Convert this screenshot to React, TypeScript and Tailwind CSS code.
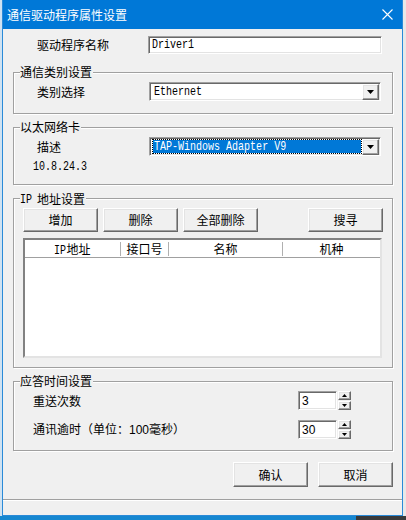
import React from "react";

const cjk = "font-['Noto_Sans_CJK_SC',sans-serif]";
const mono =
  "inline-block origin-left scale-x-[0.77] font-['Liberation_Mono',monospace] text-[13px] leading-[14px] whitespace-pre";
const raised =
  "bg-[#f0f0f0] border border-t-white border-l-white border-r-[#696969] border-b-[#696969] shadow-[inset_-1px_-1px_0_#a0a0a0,inset_1px_1px_0_#e3e3e3]";
const sunken =
  "bg-white border border-t-[#a0a0a0] border-l-[#a0a0a0] border-r-white border-b-white shadow-[inset_1px_1px_0_#696969,inset_-1px_-1px_0_#e3e3e3]";

function Btn({ children, className = "" }: { children: React.ReactNode; className?: string }) {
  return (
    <div className={`${raised} flex items-center justify-center text-[12px] text-black ${className}`}>
      {children}
    </div>
  );
}

function Group({
  label,
  className = "",
  children,
}: {
  label: React.ReactNode;
  className?: string;
  children: React.ReactNode;
}) {
  return (
    <div
      className={`relative ml-[10px] w-[380px] border border-[#a0a0a0] shadow-[1px_1px_0_#fff,inset_1px_1px_0_#fff] ${className}`}
    >
      <span className="absolute left-[6px] top-[-9px] bg-[#f0f0f0] pr-[1px] text-[12px] leading-[16px] text-black">
        {label}
      </span>
      {children}
    </div>
  );
}

function DropBtn() {
  return (
    <div className={`${raised} flex h-[16px] w-[17px] items-center justify-center`}>
      <svg width="7" height="4" viewBox="0 0 7 4">
        <path d="M0 0h7L3.5 4z" fill="#000" />
      </svg>
    </div>
  );
}

function Combo({ text, selected = false }: { text: string; selected?: boolean }) {
  return (
    <div className={`${sunken} flex h-[19px] w-[232px] items-center pl-[2px] pr-[1px]`}>
      {selected ? (
        <div className="flex h-[15px] flex-1 items-center overflow-hidden border border-white bg-[#0078d7] pl-[1px] text-white outline outline-1 -outline-offset-1 outline-dotted outline-black">
          <span className={mono}>{text}</span>
        </div>
      ) : (
        <div className="flex h-[15px] flex-1 items-center overflow-hidden pl-[2px] text-black">
          <span className={mono}>{text}</span>
        </div>
      )}
      <DropBtn />
    </div>
  );
}

function Tri({ up }: { up: boolean }) {
  return (
    <svg width="5" height="3" viewBox="0 0 5 3">
      <path d={up ? "M2.5 0L5 3H0z" : "M0 0h5L2.5 3z"} fill="#000" />
    </svg>
  );
}

function Spin({ value }: { value: string }) {
  return (
    <div className="flex h-[19px] items-stretch gap-[1px]">
      <div className={`${sunken} flex w-[39px] items-center pl-[3px] font-['Liberation_Sans',sans-serif] text-[12px] text-black`}>
        {value}
      </div>
      <div className="flex w-[13px] flex-col gap-[1px]">
        <div className={`${raised} flex flex-1 items-center justify-center`}>
          <Tri up />
        </div>
        <div className={`${raised} flex flex-1 items-center justify-center`}>
          <Tri up={false} />
        </div>
      </div>
    </div>
  );
}

export default function App() {
  return (
    <div className={`flex h-[520px] w-[406px] flex-col overflow-hidden bg-[#1687d0] ${cjk}`}>
      <div className="flex h-[516px]">
        <div className="w-[2px] bg-[#cfe2f2]" />
        <div className="flex w-[401px] flex-col border-x border-[#2a8ad8]">
          {/* title bar */}
          <div className="flex h-[29px] items-center justify-between bg-[#0078d7] pl-[4px] pr-[9px]">
            <span className="text-[12px] text-white">通信驱动程序属性设置</span>
            <svg width="11" height="11" viewBox="0 0 11 11">
              <path d="M0.5 0.5L10.5 10.5M10.5 0.5L0.5 10.5" stroke="#fff" strokeWidth="1.1" />
            </svg>
          </div>

          <div className="flex flex-1 flex-col bg-[#f0f0f0]">
            {/* driver name */}
            <div className="mt-[7px] flex h-[18px] items-center pl-[34px]">
              <span className="w-[111px] text-[12px] text-black">驱动程序名称</span>
              <div className={`${sunken} flex h-[18px] w-[234px] items-center pl-[3px] text-black`}>
                <span className={mono}>Driver1</span>
              </div>
            </div>

            {/* group 1 */}
            <Group label="通信类别设置" className="mt-[18px] pb-[12px] pt-[9px]">
              <div className="flex items-center pl-[23px]">
                <span className="w-[112px] text-[12px] text-black">类别选择</span>
                <Combo text="Ethernet" />
              </div>
            </Group>

            {/* group 2 */}
            <Group label="以太网络卡" className="mt-[13px] pb-[10px] pt-[9px]">
              <div className="flex items-center pl-[23px]">
                <span className="w-[112px] text-[12px] text-black">描述</span>
                <Combo text="TAP-Windows Adapter V9" selected />
              </div>
              <div className="mt-[4px] flex h-[14px] items-center pl-[19px] text-black">
                <span className={mono}>10.8.24.3</span>
              </div>
            </Group>

            {/* group 3 */}
            <Group
              label={
                <span className="flex items-center">
                  <span className="inline-block w-[17px]">
                    <span className={mono}>IP</span>
                  </span>
                  地址设置
                </span>
              }
              className="mt-[13px] pb-[9px] pt-[9px]"
            >
              <div className="flex h-[24px] pl-[9px]">
                <Btn className="w-[75px]">增加</Btn>
                <Btn className="ml-[5px] w-[75px]">删除</Btn>
                <Btn className="ml-[5px] w-[75px]">全部删除</Btn>
                <Btn className="ml-[50px] w-[75px]">搜寻</Btn>
              </div>
              <div className="ml-[9px] mt-[6px] flex h-[120px] w-[359px] flex-col border-2 border-t-[#828282] border-l-[#828282] border-r-[#e3e3e3] border-b-[#e3e3e3] bg-white">
                <div className="flex h-[18px] items-center border-b border-[#a0a0a0] bg-white text-[12px] text-black">
                  <div className="flex w-[95px] items-center justify-center">
                    <span className="inline-block w-[12px]">
                      <span className={mono}>IP</span>
                    </span>
                    地址
                  </div>
                  <div className="h-[14px] w-px bg-[#b0b0b0]" />
                  <div className="flex w-[47px] items-center justify-center">接口号</div>
                  <div className="h-[14px] w-px bg-[#b0b0b0]" />
                  <div className="flex w-[113px] items-center justify-center">名称</div>
                  <div className="h-[14px] w-px bg-[#b0b0b0]" />
                  <div className="flex flex-1 items-center justify-center">机种</div>
                </div>
                <div className="flex-1" />
              </div>
            </Group>

            {/* group 4 */}
            <Group label="应答时间设置" className="mt-[13px] pb-[11px] pt-[9px]">
              <div className="flex items-center pl-[19px]">
                <span className="w-[265px] text-[12px] text-black">重送次数</span>
                <Spin value="3" />
              </div>
              <div className="mt-[10px] flex items-center pl-[19px]">
                <span className="w-[265px] text-[12px] text-black">
                  通讯逾时（单位：<span className="font-['Liberation_Sans',sans-serif]">100</span>毫秒）
                </span>
                <Spin value="30" />
              </div>
            </Group>

            {/* buttons */}
            <div className="mt-[11px] flex h-[25px] justify-end gap-[10px] pr-[9px]">
              <Btn className="w-[75px]">确认</Btn>
              <Btn className="w-[75px]">取消</Btn>
            </div>

            {/* status bar */}
            <div className="mt-[12px] h-px bg-[#a0a0a0]" />
            <div className="flex-1 border-t border-white" />
          </div>
          <div className="h-px bg-[#2a8ad8]" />
        </div>
        <div className="flex w-[3px] flex-col bg-[#e8e8e8]" />
      </div>
      <div className="flex flex-1">
        <div className="w-[356px] bg-[#1687d0]" />
        <div className="flex-1 bg-[#3a3a3a]" />
      </div>
    </div>
  );
}
